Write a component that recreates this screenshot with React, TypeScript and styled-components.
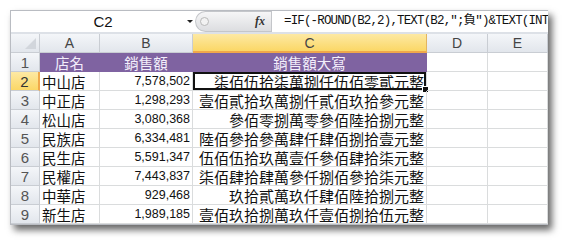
import React from 'react'
import styled, { createGlobalStyle, css } from 'styled-components'

const Global = createGlobalStyle`
  html, body {
    margin: 0;
    padding: 0;
    background: #fff;
  }
`

const Page = styled.div`
  width: 567px;
  height: 241px;
  padding: 10px 0 0 10px;
  box-sizing: border-box;
`

const Window = styled.div`
  width: 538px;
  display: flex;
  flex-direction: column;
  background: #fff;
  border: 1px solid #b9bcc2;
  border-right: none;
  box-sizing: border-box;
  box-shadow: 4px 5px 7px rgba(0, 0, 0, 0.6);
`

const FormulaBar = styled.div`
  display: flex;
  height: 21px;
  border-bottom: 2px solid #dde1e7;
`

const NameBox = styled.div`
  width: 184px;
  position: relative;
  display: flex;
  align-items: center;
  justify-content: center;
  font: 15px 'Liberation Sans', Arial, sans-serif;
  color: #111;
`

const DropArrow = styled.span`
  position: absolute;
  right: 2px;
  top: 9px;
  border-left: 3px solid transparent;
  border-right: 3px solid transparent;
  border-top: 3px solid #222;
`

const Splitter = styled.div`
  width: 76px;
  display: flex;
  align-items: center;
  justify-content: space-between;
  padding: 0 6px 0 4px;
  box-sizing: border-box;
  border-radius: 11px 0 0 11px;
  background: linear-gradient(#f6f6f7, #dcdde0);
  border: 1px solid #c4c6ca;
  border-right: none;
`

const Grip = styled.span`
  width: 7px;
  height: 7px;
  border-radius: 50%;
  background: #f2f2f2;
  border: 1px solid #b8b8b8;
`

const Fx = styled.span`
  font: italic bold 12px 'Liberation Serif', serif;
  color: #333;
`

const FormulaInput = styled.div`
  flex: 1;
  overflow: hidden;
  white-space: nowrap;
  border-left: 1px solid #c4c6ca;
  padding-left: 12px;
  font: 12.5px 'Liberation Mono', 'Noto Sans CJK TC', monospace;
  letter-spacing: -0.85px;
  line-height: 21px;
  color: #111;
`

const Sheet = styled.div`
  display: grid;
  grid-template-columns: 29px 60px 93px 234px 61px 60px;
  grid-auto-rows: 19px;
`

const headBase = css`
  display: flex;
  align-items: center;
  justify-content: center;
  font: 14px 'Liberation Sans', Arial, sans-serif;
  color: #444;
  box-sizing: border-box;
  border-right: 1px solid #c9cdd3;
  border-bottom: 1px solid #c9cdd3;
  background: linear-gradient(#f4f6f9, #e2e6ec);
`

const Corner = styled.div`
  ${headBase};
  position: relative;
  &::after {
    content: '';
    position: absolute;
    right: 3px;
    bottom: 3px;
    border-left: 11px solid transparent;
    border-bottom: 11px solid #d2d6dc;
  }
`

const ColHead = styled.div<{ $sel?: boolean }>`
  ${headBase};
  ${(p) =>
    p.$sel &&
    css`
      background: linear-gradient(#fde9a4, #fbd766);
      border-bottom: 2px solid #f0a84a;
      border-right-color: #e3b560;
    `}
`

const RowHead = styled.div<{ $sel?: boolean }>`
  ${headBase};
  font-size: 15px;
  color: #555;
  ${(p) =>
    p.$sel &&
    css`
      background: linear-gradient(#fde9a4, #fbd766);
      border-right: 2px solid #f0a84a;
      color: #333;
    `}
`

type Align = 'left' | 'right' | 'center'

const Cell = styled.div<{ $align?: Align; $kind?: 'cjk' | 'num' }>`
  position: relative;
  display: flex;
  align-items: center;
  box-sizing: border-box;
  border-right: 1px solid #dadcdd;
  border-bottom: 1px solid #dadcdd;
  padding: 0 2px;
  white-space: nowrap;
  color: #111;
  justify-content: ${(p) =>
    p.$align === 'right' ? 'flex-end' : p.$align === 'center' ? 'center' : 'flex-start'};
  font: ${(p) =>
    p.$kind === 'num'
      ? "12.5px 'Liberation Sans', Arial, sans-serif"
      : "14.5px 'Noto Sans CJK TC', 'Noto Sans CJK JP', sans-serif"};
`

const TitleCell = styled(Cell)`
  background: #7f63a1;
  border-color: #7f63a1;
  color: #f3eefb;
`

const ActiveCell = styled(Cell)`
  box-shadow: inset 0 0 0 2px #111;
`

const FillHandle = styled.span`
  position: absolute;
  right: -3px;
  bottom: -3px;
  width: 5px;
  height: 5px;
  background: #111;
  border: 1px solid #fff;
`

const WideText = styled.span`
  font-size: 15px;
`

const rows = [
  ['中山店', '7,578,502', '柒佰伍拾柒萬捌仟伍佰零貳元整'],
  ['中正店', '1,298,293', '壹佰貳拾玖萬捌仟貳佰玖拾參元整'],
  ['松山店', '3,080,368', '參佰零捌萬零參佰陸拾捌元整'],
  ['民族店', '6,334,481', '陸佰參拾參萬肆仟肆佰捌拾壹元整'],
  ['民生店', '5,591,347', '伍佰伍拾玖萬壹仟參佰肆拾柒元整'],
  ['民權店', '7,443,837', '柒佰肆拾肆萬參仟捌佰參拾柒元整'],
  ['中華店', '929,468', '玖拾貳萬玖仟肆佰陸拾捌元整'],
  ['新生店', '1,989,185', '壹佰玖拾捌萬玖仟壹佰捌拾伍元整'],
]

const App = () => {
  return (
    <Page>
      <Global />
      <Window>
        <FormulaBar>
          <NameBox>
            C2
            <DropArrow />
          </NameBox>
          <Splitter>
            <Grip />
            <Fx>fx</Fx>
          </Splitter>
          <FormulaInput>=IF(-ROUND(B2,2),TEXT(B2,";負")&amp;TEXT(INT</FormulaInput>
        </FormulaBar>
        <Sheet>
          <Corner />
          <ColHead>A</ColHead>
          <ColHead>B</ColHead>
          <ColHead $sel>C</ColHead>
          <ColHead>D</ColHead>
          <ColHead>E</ColHead>

          <RowHead>1</RowHead>
          <TitleCell $align="center">店名</TitleCell>
          <TitleCell $align="center">銷售額</TitleCell>
          <TitleCell $align="center">銷售額大寫</TitleCell>
          <Cell />
          <Cell />

          {rows.map(([store, amount, words], i) => {
            const Big = i === 0 ? ActiveCell : Cell
            return (
              <React.Fragment key={store}>
                <RowHead $sel={i === 0}>{i + 2}</RowHead>
                <Cell>{store}</Cell>
                <Cell $align="right" $kind="num">
                  {amount}
                </Cell>
                <Big $align="right">
                  <WideText>{words}</WideText>
                  {i === 0 && <FillHandle />}
                </Big>
                <Cell />
                <Cell />
              </React.Fragment>
            )
          })}
        </Sheet>
      </Window>
    </Page>
  )
}

export default App
